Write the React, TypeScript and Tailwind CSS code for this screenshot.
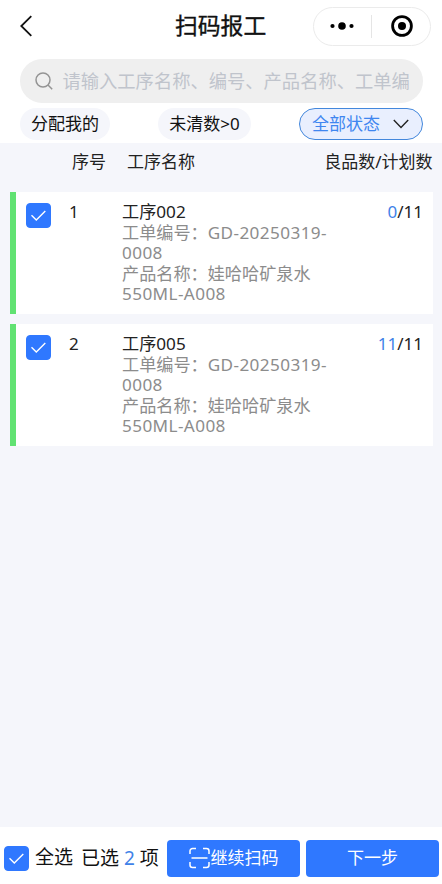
import { useState } from "react";

const TASKS = [
  { id: 1, name: "工序002", order: "GD-20250319-0008", product: "娃哈哈矿泉水", spec: "550ML-A008", good: 0, plan: 11 },
  { id: 2, name: "工序005", order: "GD-20250319-0008", product: "娃哈哈矿泉水", spec: "550ML-A008", good: 11, plan: 11 },
];

function CheckBox({ checked, onChange }: { checked: boolean; onChange: () => void }) {
  return (
    <button
      type="button"
      role="checkbox"
      aria-checked={checked}
      onClick={onChange}
      className={`flex h-[25px] w-[25px] shrink-0 items-center justify-center rounded-[4px] border ${
        checked ? "border-[#2f78ff] bg-[#2f78ff]" : "border-gray-300 bg-white"
      }`}
    >
      {checked && (
        <svg width="17" height="13" viewBox="0 0 17 13" fill="none" stroke="#fff" strokeWidth="1.4">
          <path d="M1.500 6.200 6.300 11 15.300 2" />
        </svg>
      )}
    </button>
  );
}

export default function App() {
  const [selected, setSelected] = useState<number[]>(TASKS.map((t) => t.id));

  const toggle = (id: number) => {
    setSelected((prev) => (prev.includes(id) ? prev.filter((i) => i !== id) : [...prev, id]));
  };

  const allSelected = selected.length === TASKS.length;

  return (
    <div className="flex h-[884px] w-[442px] flex-col overflow-hidden bg-[#f5f6fb] font-['Noto_Sans','Noto_Sans_CJK_SC',sans-serif] text-[17px] leading-[20.5px] text-[#222]">
      <header className="h-[143px] shrink-0 bg-white">
        <div className="flex h-[52px] items-center pr-[11px] pl-[19px]">
          <svg width="14" height="22" viewBox="0 0 14 22" fill="none" stroke="#111" strokeWidth="1.8">
            <path d="M12.3 1.2 2.3 11l10 9.8" />
          </svg>
          <h1 className="ml-[142px] text-[22.8px] leading-8 font-normal whitespace-nowrap text-[#111] [-webkit-text-stroke:0.35px_#111]">
            扫码报工
          </h1>
          <div className="ml-auto flex h-[39px] w-[118px] items-center rounded-full border border-[#ebebeb]">
            <svg width="57" height="24" viewBox="0 0 57 24" fill="#000">
              <circle cx="18.5" cy="12" r="2.1" />
              <circle cx="28" cy="12" r="3.8" />
              <circle cx="37.500" cy="12" r="2.1" />
            </svg>
            <div className="h-[23px] w-px bg-[#e5e5e5]" />
            <svg width="58" height="24" viewBox="0 0 58 24">
              <circle cx="30" cy="12" r="9.4" fill="none" stroke="#000" strokeWidth="2.8" />
              <circle cx="30" cy="12" r="4" />
            </svg>
          </div>
        </div>

        <div className="mt-[7px] ml-5 flex h-11 w-[403px] items-center rounded-full bg-[#efefef] pl-[15px]">
          <svg width="18" height="18" viewBox="0 0 18 18" fill="none" stroke="#949494" strokeWidth="1.5">
            <circle cx="8" cy="8" r="7" />
            <path d="m13 13 4.2 4.2" />
          </svg>
          <span className="ml-[9.5px] text-[18.3px] whitespace-nowrap text-[#c0c4cc]">
            请输入工序名称、编号、产品名称、工单编
          </span>
        </div>

        <div className="mt-[5px] ml-5 flex h-8 w-[403px]">
          <button type="button" className="w-[90px] rounded-full bg-[#f5f6fb] text-[#111]">
            分配我的
          </button>
          <button type="button" className="ml-[48px] w-[93px] rounded-full bg-[#f5f6fb] text-[#111]">
            未清数&gt;0
          </button>
          <button
            type="button"
            className="ml-auto flex w-[124px] items-center justify-between rounded-full border border-[#4387dc] bg-[#e9effe] pr-[13px] pl-[12px] text-[#3f86f0]"
          >
            全部状态
            <svg width="16" height="10" viewBox="0 0 16 10" fill="none" stroke="#222" strokeWidth="1.4">
              <path d="M.8 1 8 8.4 15.2 1" />
            </svg>
          </button>
        </div>
      </header>

      <div className="flex h-[49px] shrink-0 items-center pr-[9.5px] pb-[10px] pl-[72px]">
        <span>序号</span>
        <span className="ml-[21px]">工序名称</span>
        <span className="ml-auto">良品数/计划数</span>
      </div>

      <main className="flex flex-1 flex-col gap-[10px] pr-[9px] pl-[10px]">
        {TASKS.map((task) => (
          <div key={task.id} className="flex h-[122px] border-l-[6px] border-[#61e272] bg-white pt-[10px] pr-[10px] pl-[10px]">
            <div className="mt-px">
              <CheckBox checked={selected.includes(task.id)} onChange={() => toggle(task.id)} />
            </div>
            <span className="ml-[18px] w-[53px]">{task.id}</span>
            <div className="w-[216px] text-[17.15px] text-[#8c8c8c]">
              <p className="text-[#222]">{task.name}</p>
              <p>
                工单编号：<span className="tracking-[0.4px]">{task.order}</span>
              </p>
              <p>
                产品名称：{task.product}
                <span className="tracking-[0.4px]">{task.spec}</span>
              </p>
            </div>
            <span className="ml-auto">
              <span className="text-[#3f82e8]">{task.good}</span>/{task.plan}
            </span>
          </div>
        ))}
      </main>

      <footer className="flex h-[57px] shrink-0 items-center bg-white pt-[5px] pr-[3px] pl-1">
        <CheckBox checked={allSelected} onChange={() => setSelected(allSelected ? [] : TASKS.map((t) => t.id))} />
        <span className="mb-[2px] ml-[6px] text-[19px] whitespace-nowrap text-[#111]">全选</span>
        <span className="ml-[8px] text-[19px] whitespace-nowrap text-[#111]">
          已选 <span className="text-[#3f82e8]">{selected.length}</span> 项
        </span>
        <button
          type="button"
          className="ml-auto flex h-[37px] w-[133px] items-center justify-center rounded-[4px] bg-[#2f78ff] text-white"
        >
          <svg width="22" height="22" viewBox="0 0 22 22" fill="none" stroke="#fff" strokeWidth="1.5">
            <path d="M1 7V4a2.500 2.500 0 0 1 2.500-2.500h3.500M14 1.500h3.500A2.500 2.500 0 0 1 20 4v3M1 15v3a2.500 2.500 0 0 0 2.500 2.500h3.500M14 20.500h3.500A2.500 2.500 0 0 0 20 18v-3M2.500 11h16" />
          </svg>
          继续扫码
        </button>
        <button type="button" className="ml-[6px] h-[37px] w-[133px] rounded-[4px] bg-[#2f78ff] text-white">
          下一步
        </button>
      </footer>
    </div>
  );
}
